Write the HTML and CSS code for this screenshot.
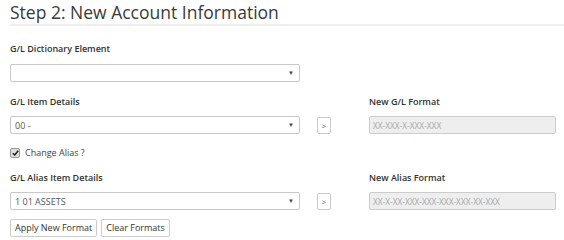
FILE: index.html
```html
<!DOCTYPE html>
<html>
<head>
<meta charset="utf-8">
<link rel="stylesheet" href="styles.css">
</head>
<body>
<div class="page">
  <h1 class="title">Step 2: New Account Information</h1>

  <div class="label label-first">G/L Dictionary Element</div>
  <div class="row">
    <div class="select"><span class="val"></span><span class="caret">▼</span></div>
  </div>

  <div class="row labels">
    <div class="label col-a">G/L Item Details</div>
    <div class="label col-c">New G/L Format</div>
  </div>
  <div class="row">
    <div class="select col-a"><span class="val">00 -</span><span class="caret">▼</span></div>
    <div class="arrow-btn">&gt;</div>
    <div class="format col-c">XX-XXX-X-XXX-XXX</div>
  </div>

  <label class="check">
    <span class="box"><svg width="7" height="6" viewBox="0 0 7 6"><path d="M0.8 3.2 L2.7 5 L6.2 0.8" fill="none" stroke="#222" stroke-width="1.5"/></svg></span>
    <span>Change Alias ?</span>
  </label>

  <div class="row labels labels-alias">
    <div class="label col-a">G/L Alias Item Details</div>
    <div class="label col-c">New Alias Format</div>
  </div>
  <div class="row">
    <div class="select col-a"><span class="val">1 01 ASSETS</span><span class="caret">▼</span></div>
    <div class="arrow-btn">&gt;</div>
    <div class="format col-c">XX-X-XX-XXX-XXX-XXX-XXX-XX-XXX</div>
  </div>

  <div class="buttons">
    <button class="btn">Apply New Format</button>
    <button class="btn">Clear Formats</button>
  </div>
</div>
</body>
</html>
```
FILE: styles.css
```css
html, body {
  margin: 0;
  padding: 0;
  background: #fff;
}
body {
  font-family: "Open Sans", "Liberation Sans", sans-serif;
  color: #333;
  font-size: 9px;
}
.page {
  padding-left: 10px;
}
.title {
  margin: 0;
  padding-top: 1px;
  height: 23px;
  font-size: 17.5px;
  font-weight: 400;
  line-height: 23px;
  color: #3a3a3a;
  border-bottom: 2px solid #efefef;
}
.label {
  font-size: 9px;
  font-weight: 600;
  line-height: 12px;
  color: #333;
}
.label-first {
  margin-top: 17px;
  margin-bottom: 9px;
}
.row {
  display: flex;
  align-items: center;
}
.labels {
  margin-top: 14px;
  margin-bottom: 8px;
}
.labels-alias {
  margin-top: 13px;
}
.col-a {
  width: 290px;
  flex: none;
}
.col-c {
  width: 187px;
  flex: none;
}
.labels .col-c {
  margin-left: 69px;
}
.select {
  box-sizing: border-box;
  width: 290px;
  height: 18px;
  border: 1px solid #c8c8c8;
  border-radius: 2px;
  display: flex;
  align-items: center;
  justify-content: space-between;
  padding: 0 5px 0 4px;
  font-size: 9px;
  color: #555;
}
.caret {
  font-size: 6px;
  color: #444;
}
.arrow-btn {
  box-sizing: border-box;
  width: 14px;
  height: 17px;
  margin-left: 17px;
  border: 1px solid #ccc;
  border-radius: 2px;
  display: flex;
  align-items: center;
  justify-content: center;
  font-size: 8px;
  color: #666;
}
.format {
  box-sizing: border-box;
  height: 18px;
  margin-left: 38px;
  background: #eee;
  border: 1px solid #ccc;
  border-radius: 2px;
  padding-left: 3px;
  display: flex;
  align-items: center;
  font-size: 8.3px;
  color: #a8a8a8;
}
.check {
  display: flex;
  align-items: center;
  gap: 5px;
  margin-top: 12px;
  font-size: 9px;
  color: #444;
}
.box {
  box-sizing: border-box;
  width: 10px;
  height: 10px;
  border: 1px solid #999;
  border-radius: 2px;
  background: #ddd;
  display: flex;
  align-items: center;
  justify-content: center;
}
.buttons {
  display: flex;
  gap: 4px;
  margin-top: 9px;
}
.btn {
  box-sizing: border-box;
  height: 18px;
  padding: 0 4px;
  border: 1px solid #ccc;
  border-radius: 2px;
  background: #fff;
  font-family: "Open Sans", "Liberation Sans", sans-serif;
  font-size: 9px;
  line-height: 16px;
  color: #333;
}
```
